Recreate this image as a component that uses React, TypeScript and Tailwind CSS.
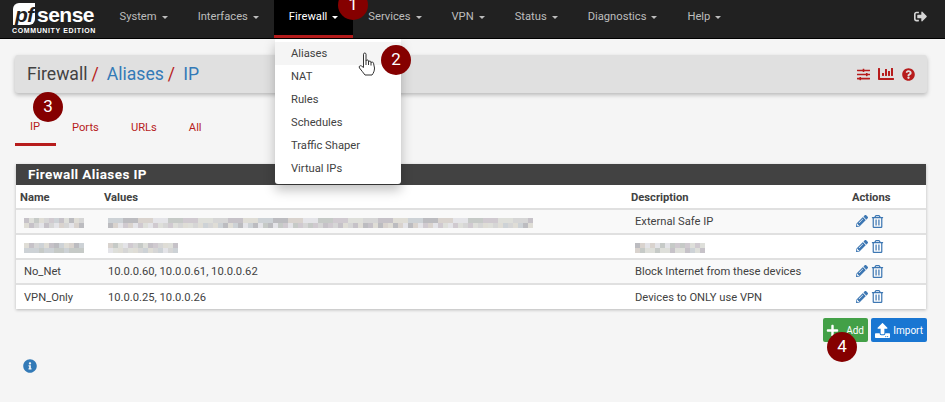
import { FaPencilAlt, FaRegTrashAlt, FaSlidersH, FaChartBar, FaQuestionCircle, FaSignOutAlt, FaPlus, FaUpload, FaInfoCircle } from "react-icons/fa";

const navItems = ["System", "Interfaces", "Firewall", "Services", "VPN", "Status", "Diagnostics", "Help"];
const menuItems = ["Aliases", "NAT", "Rules", "Schedules", "Traffic Shaper", "Virtual IPs"];
const tabs = ["IP", "Ports", "URLs", "All"];
const mosaicColors = ["#d6d6d6", "#c6c2c8", "#dfddd6", "#cdd2d6", "#bcbcc0", "#d9d3ce", "#e4e4e8", "#c6cac7", "#d0cad0", "#dedfda"];

// stands in for the blurred-out text in the reference
function Mosaic({ width, seed }: { width: number; seed: number }) {
  const count = Math.floor(width / 5);
  return (
    <div className="flex flex-col">
      {[0, 1].map((row) => (
        <div key={row} className="flex h-[5px]">
          {Array.from({ length: count }).map((_, i) => (
            <span key={i} className="h-full w-[5px]" style={{ backgroundColor: mosaicColors[(i * 7 + seed + (i % 3) * seed + row * (i % 4 + 1)) % mosaicColors.length] }} />
          ))}
        </div>
      ))}
    </div>
  );
}

function Marker({ n, className }: { n: number; className: string }) {
  return (
    <div className={`absolute z-40 flex h-[30px] w-[30px] items-center justify-center rounded-full bg-[#850000] text-[17px] text-white ${className}`}>
      {n}
    </div>
  );
}

function Caret() {
  return <span className="ml-[5px] inline-block h-0 w-0 border-x-[3px] border-t-[3px] border-x-transparent border-t-current align-middle" />;
}

function HandCursor() {
  return (
    <svg width="19" height="24" viewBox="0 0 19 24" className="absolute left-[358px] top-[52px] z-40" fill="#fff" stroke="#333" strokeWidth="1" strokeLinejoin="round">
      <path d="M5.5 2.2C5.5.6 8 .6 8 2.2V9C8 7.6 10.5 7.6 10.5 9V10C10.5 8.8 13 8.8 13 10V11C13 9.8 15.5 9.8 15.5 11.2L16.5 16C16.5 19 15.5 21 14 23H7C5.5 21 3.5 18.5 1.5 16C.5 14.5 2 13 3.5 14L5.5 15.5Z" />
      <path d="M8 9V13M10.5 10V13M13 11V13.5" fill="none" />
    </svg>
  );
}

function Logo() {
  return (
    <div className="flex w-[84px] flex-col items-center">
      <div className="flex h-[22px] w-full items-center pl-[1px]">
        <span className="flex h-[22px] w-[22px] items-center justify-center rounded-tl-[6px] rounded-br-[6px] bg-white font-['Liberation_Sans',sans-serif] text-[21px] font-bold italic leading-none tracking-[-1px] text-[#212121]">pf</span>
        <span className="ml-[2px] font-['Liberation_Sans',sans-serif] text-[21px] font-bold leading-none tracking-[-0.5px] text-white">sense</span>
      </div>
      <span className="mt-[2px] whitespace-nowrap font-['Liberation_Sans',sans-serif] text-[7px] font-bold leading-[8px] tracking-[0.62px] text-white">COMMUNITY EDITION</span>
    </div>
  );
}

function Navbar() {
  return (
    <nav className="flex h-[39px] items-stretch border-b border-black bg-[#212121] pl-[12px] pr-[18px]">
      <div className="flex w-[92.5px] items-center"><Logo /></div>
      <ul className="flex flex-1 items-stretch">
        {navItems.map((item) => (
          <li
            key={item}
            className={
              item === "Firewall"
                ? "flex items-center border-b-[3px] border-[#b71c1c] bg-black px-[15px] text-white"
                : "flex items-center px-[15px] pb-[3px] text-[#bdbdbd]"
            }
          >
            {item}
            <Caret />
          </li>
        ))}
      </ul>
      <div className="flex items-center pb-[5px] text-[#d5d5d5]"><FaSignOutAlt size={13} /></div>
    </nav>
  );
}

function Dropdown() {
  return (
    <div className="absolute left-[275px] top-[39px] z-30 h-[145px] w-[126px] rounded-b-[3px] bg-white pt-[3px] shadow-[0_6px_12px_rgba(0,0,0,0.25)]">
      {menuItems.map((item, i) => (
        <div key={item} className={`flex h-[23px] items-center pl-[16px] pt-[2px] text-[#424242] ${i === 0 ? "bg-[#f5f5f5]" : ""}`}>
          {item}
        </div>
      ))}
    </div>
  );
}

function Row({ name, values, description, striped }: { name: React.ReactNode; values: React.ReactNode; description: React.ReactNode; striped: boolean }) {
  return (
    <tr className={`h-[25px] border-t-2 border-[#e0e0e0] ${striped ? "bg-[#f9f9f9]" : "bg-white"}`}>
      <td className="pl-[8px] pt-[2px]">{name}</td>
      <td className="pl-[8px] pt-[2px]">{values}</td>
      <td className="pl-[8px] pt-[2px]">{description}</td>
      <td className="pb-[1px] pl-[8px]">
        <div className="flex items-center gap-[3px] text-[#3d77b3]">
          <FaPencilAlt size={12} />
          <FaRegTrashAlt size={13} />
        </div>
      </td>
    </tr>
  );
}

export default function App() {
  return (
    <div className="relative h-[402px] w-[945px] overflow-hidden bg-[#f5f5f5] font-['Roboto',sans-serif] text-[11.2px] text-[#424242]">
      <Navbar />
      <Dropdown />
      <Marker n={1} className="left-[338px] top-[-10px]" />
      <Marker n={2} className="left-[381px] top-[45px]" />
      <Marker n={3} className="left-[33px] top-[92px]" />
      <Marker n={4} className="left-[827px] top-[332px]" />
      <HandCursor />

      <main className="pl-[15px] pr-[18px] pt-[16px]">
        <div className="flex h-[38px] items-center justify-between rounded-[3px] bg-[#e0e0e0] px-[12px] shadow-[0_2px_4px_rgba(0,0,0,0.25)]">
          <h1 className="flex items-baseline text-[17.6px] font-normal">
            <span>Firewall</span>
            <span className="ml-[4px] text-[#b71c1c]">/</span>
            <span className="ml-[8px] text-[#337ab7]">Aliases</span>
            <span className="ml-[4px] text-[#b71c1c]">/</span>
            <span className="ml-[8px] text-[#337ab7]">IP</span>
          </h1>
          <div className="flex items-center gap-[8px] text-[#b71c1c]">
            <FaSlidersH size={13} />
            <FaChartBar size={16} />
            <FaQuestionCircle size={13} />
          </div>
        </div>

        <ul className="mt-[17px] flex h-[36px] items-stretch">
          {tabs.map((tab) => (
            <li
              key={tab}
              className={`flex items-center text-[#b71c1c] ${tab === "IP" ? "w-[41px] border-b-[3px] border-[#b71c1c] px-[15px] pt-[1px]" : "px-[16px] pt-[1px]"}`}
            >
              {tab}
            </li>
          ))}
        </ul>

        <section className="mx-px mt-[18px] bg-white shadow-[0_1px_3px_rgba(0,0,0,0.25)]">
          <h2 className="flex h-[21px] items-center bg-[#424242] pl-[12px] text-[13.5px] font-bold tracking-[0.4px] text-white">Firewall Aliases IP</h2>
          <table className="w-full table-fixed border-collapse">
            <colgroup>
              <col className="w-[84px]" />
              <col className="w-[527px]" />
              <col className="w-[221px]" />
              <col className="w-[78px]" />
            </colgroup>
            <thead>
              <tr className="h-[24px] text-left font-bold">
                <th className="pl-[4px] pt-[3px]">Name</th>
                <th className="pl-[4px] pt-[3px]">Values</th>
                <th className="pl-[4px] pt-[3px]">Description</th>
                <th className="pl-[4px] pt-[3px]">Actions</th>
              </tr>
            </thead>
            <tbody>
              <Row striped name={<Mosaic width={60} seed={1} />} values={<Mosaic width={425} seed={3} />} description="External Safe IP" />
              <Row striped={false} name={<Mosaic width={60} seed={2} />} values={<Mosaic width={70} seed={5} />} description={<Mosaic width={70} seed={4} />} />
              <Row striped name="No_Net" values="10.0.0.60, 10.0.0.61, 10.0.0.62" description="Block Internet from these devices" />
              <Row striped={false} name="VPN_Only" values="10.0.0.25, 10.0.0.26" description="Devices to ONLY use VPN" />
            </tbody>
          </table>
        </section>

        <div className="mt-[9px] flex justify-end gap-[3px] text-[10px] text-white">
          <button className="flex h-[24px] w-[45px] items-center justify-between rounded-[2px] bg-[#43a047] pl-[3px] pr-[4px]">
            <FaPlus size={13} />
            <span>Add</span>
          </button>
          <button className="flex h-[24px] w-[56px] items-center justify-between rounded-[2px] bg-[#1976d2] pl-[4px] pr-[4px]">
            <FaUpload size={15} />
            <span>Import</span>
          </button>
        </div>

        <div className="mt-[17px] pl-[8px] text-[#337ab7]"><FaInfoCircle size={14} /></div>
      </main>
    </div>
  );
}
